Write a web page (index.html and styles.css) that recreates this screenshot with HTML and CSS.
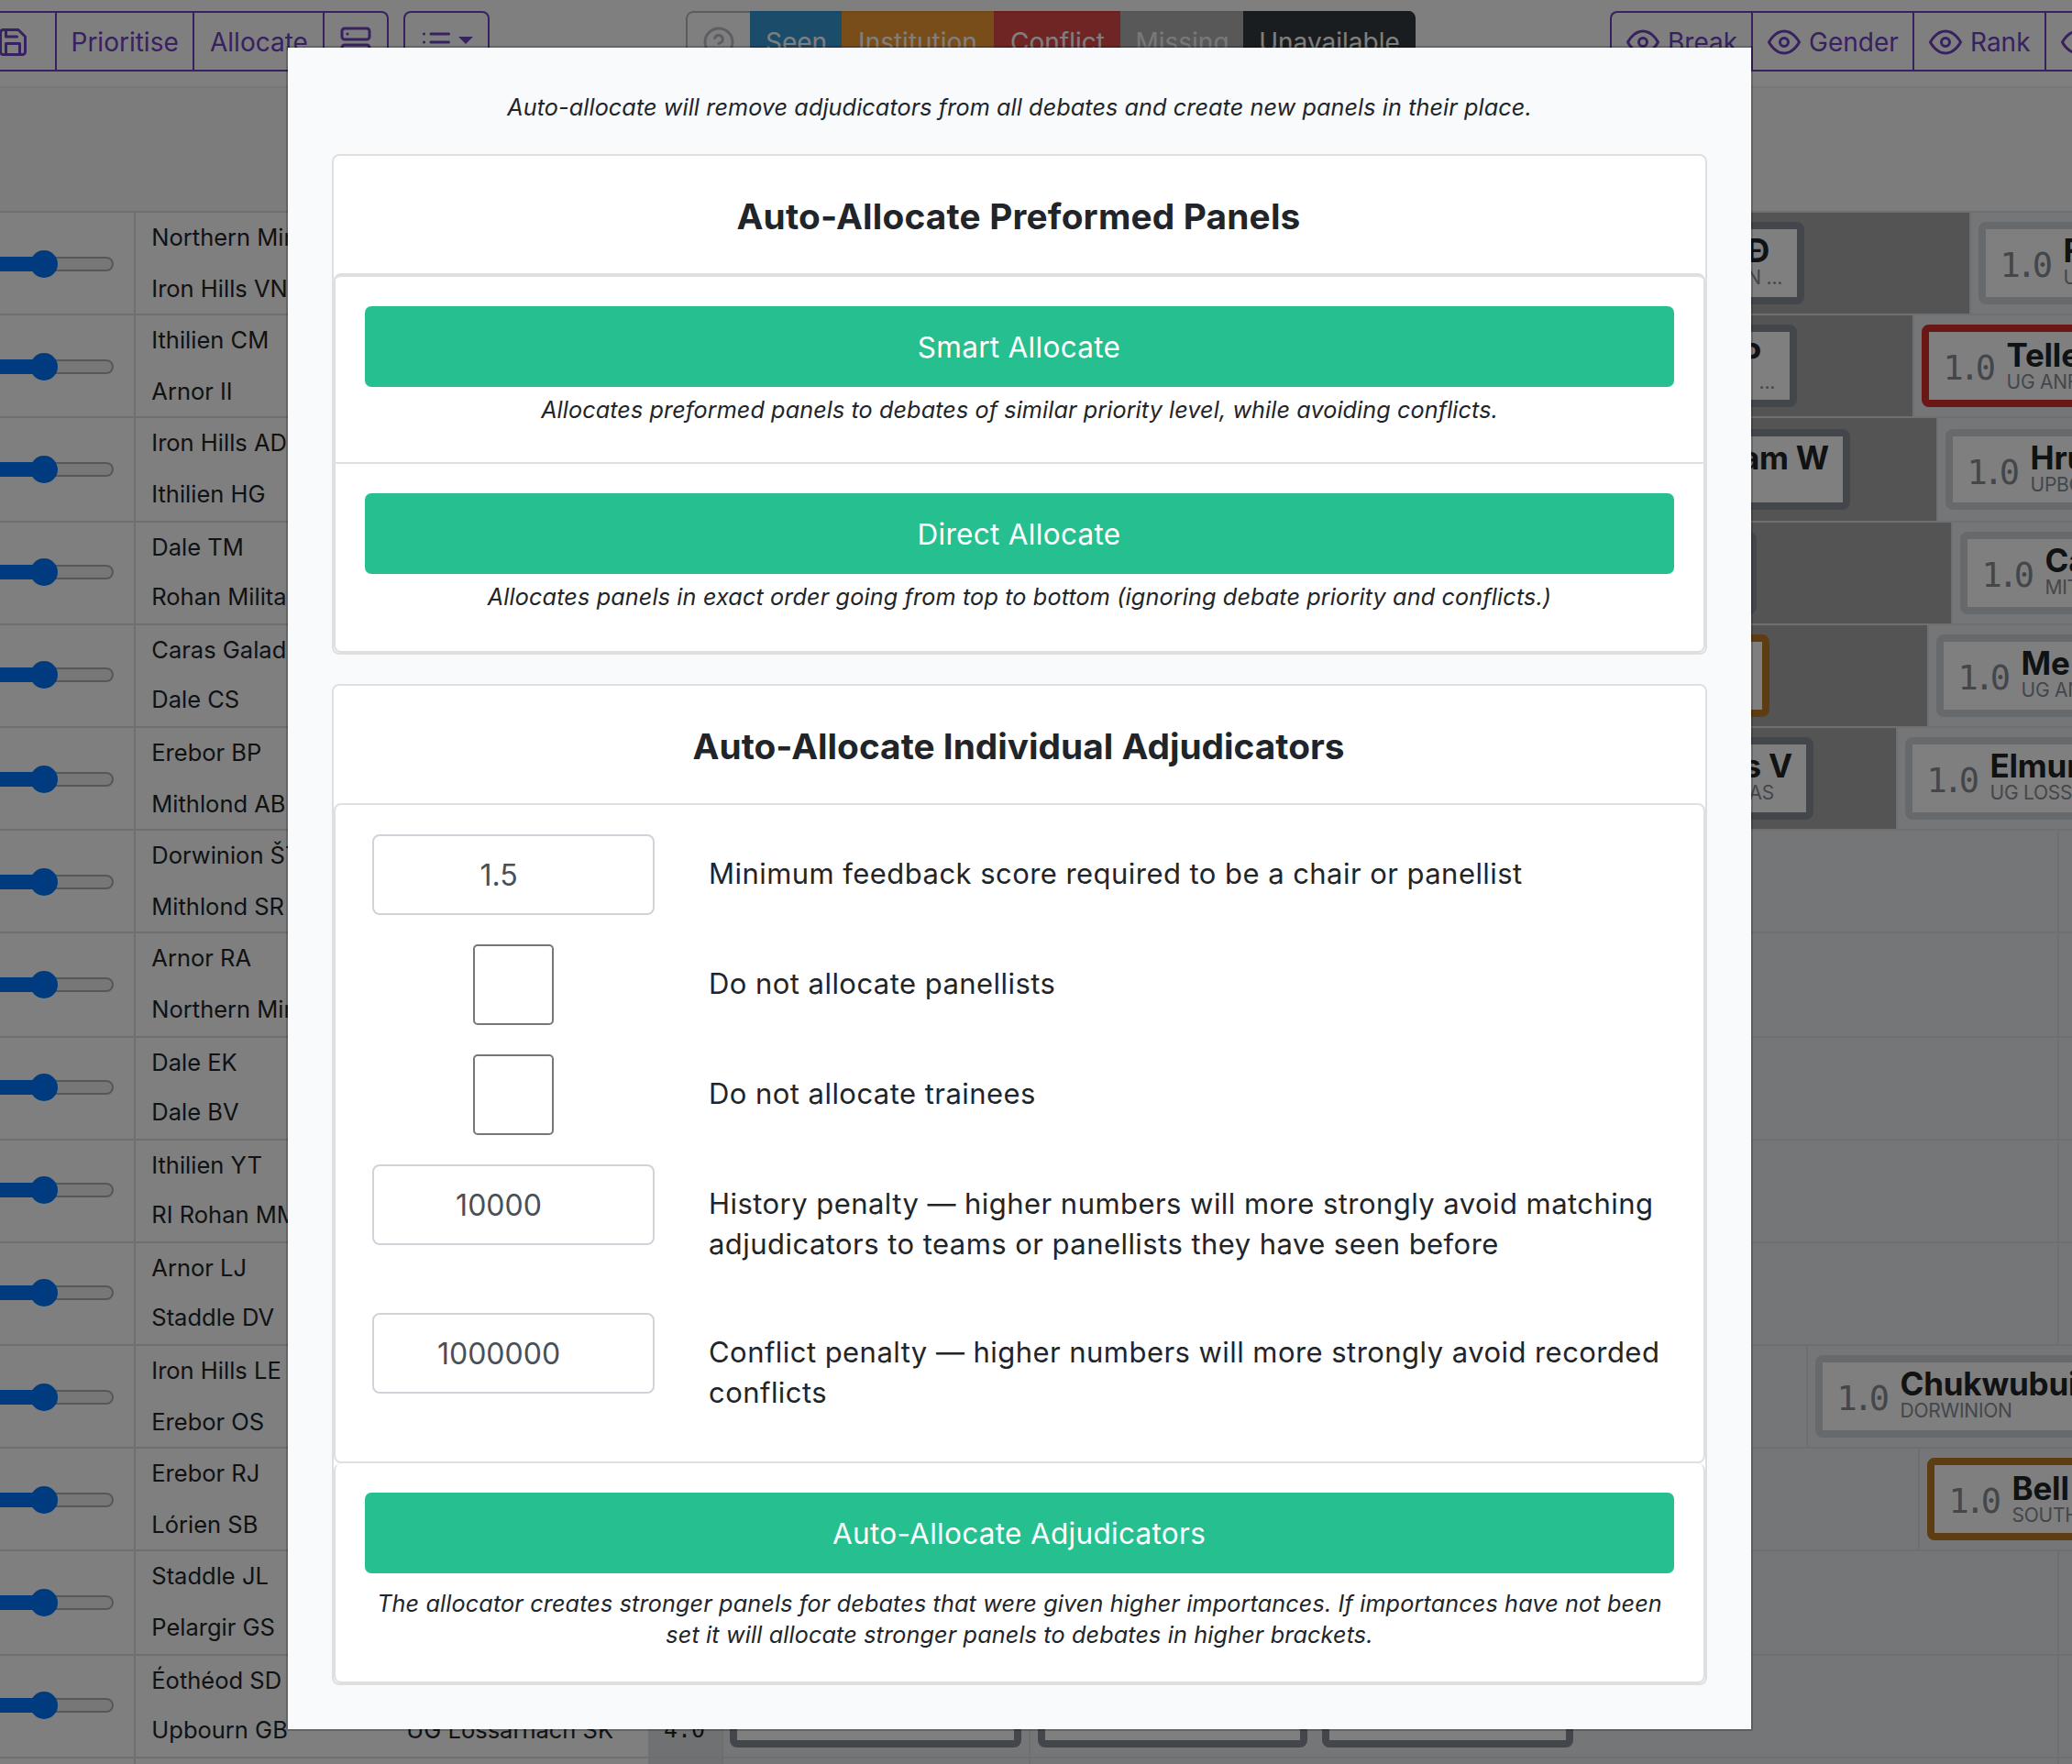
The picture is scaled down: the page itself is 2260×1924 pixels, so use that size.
FILE: index.html
```
<!DOCTYPE html>
<html lang="en">
<head>
<meta charset="utf-8">
<title>Edit Adjudicators</title>
<link rel="stylesheet" href="styles.css">
</head>
<body>
<svg class="defs" width="0" height="0">
  <symbol id="eye" viewBox="0 0 24 24"><path d="M1 12s4-8 11-8 11 8 11 8-4 8-11 8-11-8-11-8z"/><circle cx="12" cy="12" r="3"/></symbol>
  <symbol id="save" viewBox="0 0 24 24"><path d="M19 21H5a2 2 0 0 1-2-2V5a2 2 0 0 1 2-2h11l5 5v11a2 2 0 0 1-2 2z"/><path d="M17 21v-8H7v8M7 3v5h8"/></symbol>
  <symbol id="server" viewBox="0 0 24 24"><rect x="2" y="2" width="20" height="8" rx="2"/><rect x="2" y="14" width="20" height="8" rx="2"/><path d="M6 6h.01M6 18h.01"/></symbol>
  <symbol id="list" viewBox="0 0 24 24"><path d="M8 6h13M8 12h13M8 18h13M3 6h.01M3 12h.01M3 18h.01"/></symbol>
  <symbol id="help" viewBox="0 0 24 24"><circle cx="12" cy="12" r="10"/><path d="M9.09 9a3 3 0 0 1 5.83 1c0 2-3 3-3 3M12 17h.01"/></symbol>
</svg>

<nav class="toolbar">
  <div class="group tools">
    <span class="btn btn-save"><svg class="icon"><use href="#save"/></svg></span>
    <span class="btn btn-prioritise">Prioritise</span>
    <span class="btn btn-allocate">Allocate</span>
    <span class="btn btn-server"><svg class="icon"><use href="#server"/></svg></span>
  </div>
  <div class="group menu">
    <span class="btn"><svg class="icon"><use href="#list"/></svg><i class="caret"></i></span>
  </div>
  <div class="legend">
    <span class="key key-help"><svg class="icon"><use href="#help"/></svg></span>
    <span class="key key-seen">Seen</span>
    <span class="key key-institution">Institution</span>
    <span class="key key-conflict">Conflict</span>
    <span class="key key-missing">Missing</span>
    <span class="key key-unavailable">Unavailable</span>
  </div>
  <div class="group views">
    <span class="btn view-break"><svg class="icon"><use href="#eye"/></svg>Break</span>
    <span class="btn view-gender"><svg class="icon"><use href="#eye"/></svg>Gender</span>
    <span class="btn view-rank"><svg class="icon"><use href="#eye"/></svg>Rank</span>
    <span class="btn view-more"><svg class="icon"><use href="#eye"/></svg></span>
  </div>
</nav>

<main class="debates">
  <div class="row">
    <div class="importance"><div class="slider"><i></i></div></div>
    <div class="teams"><p>Northern Min</p><p>Iron Hills VN</p></div><div class="bracket"></div>
    <div class="panel full"><div class="adj ends"><b>Đ</b><small>N ...</small></div></div>
    <div class="trainees"><div class="adj"><span>1.0</span><div><b>F</b><small>U</small></div></div></div>
  </div>
  <div class="row low">
    <div class="importance"><div class="slider"><i></i></div></div>
    <div class="teams"><p>Ithilien CM</p><p>Arnor II</p></div><div class="bracket"></div>
    <div class="panel full"><div class="adj ends"><b>P</b><small>...</small></div></div>
    <div class="trainees"><div class="adj conflict"><span>1.0</span><div><b>Telle</b><small>UG ANF</small></div></div></div>
  </div>
  <div class="row low short">
    <div class="importance"><div class="slider"><i></i></div></div>
    <div class="teams"><p>Iron Hills AD</p><p>Ithilien HG</p></div><div class="bracket"></div>
    <div class="panel full"><div class="adj ends"><b>am W</b></div></div>
    <div class="trainees"><div class="adj"><span>1.0</span><div><b>Hru</b><small>UPBO</small></div></div></div>
  </div>
  <div class="row tight">
    <div class="importance"><div class="slider"><i></i></div></div>
    <div class="teams"><p>Dale TM</p><p>Rohan Milita</p></div><div class="bracket"></div>
    <div class="panel full"><div class="adj ends"></div></div>
    <div class="trainees"><div class="adj"><span>1.0</span><div><b>Ca</b><small>MIT</small></div></div></div>
  </div>
  <div class="row tight">
    <div class="importance"><div class="slider"><i></i></div></div>
    <div class="teams"><p>Caras Galad</p><p>Dale CS</p></div><div class="bracket"></div>
    <div class="panel full"><div class="adj ends institution"></div></div>
    <div class="trainees"><div class="adj"><span>1.0</span><div><b>Me</b><small>UG AN</small></div></div></div>
  </div>
  <div class="row">
    <div class="importance"><div class="slider"><i></i></div></div>
    <div class="teams"><p>Erebor BP</p><p>Mithlond AB</p></div><div class="bracket"></div>
    <div class="panel full"><div class="adj ends"><b>s V</b><small>AS</small></div></div>
    <div class="trainees"><div class="adj"><span>1.0</span><div><b>Elmur</b><small>UG LOSS</small></div></div></div>
  </div>
  <div class="row">
    <div class="importance"><div class="slider"><i></i></div></div>
    <div class="teams"><p>Dorwinion ŠT</p><p>Mithlond SR</p></div><div class="bracket"></div>
    <div class="panel"></div><div class="trainees"></div>
  </div>
  <div class="row">
    <div class="importance"><div class="slider"><i></i></div></div>
    <div class="teams"><p>Arnor RA</p><p>Northern Min</p></div><div class="bracket"></div>
    <div class="panel"></div><div class="trainees"></div>
  </div>
  <div class="row tight">
    <div class="importance"><div class="slider"><i></i></div></div>
    <div class="teams"><p>Dale EK</p><p>Dale BV</p></div><div class="bracket"></div>
    <div class="panel"></div><div class="trainees"></div>
  </div>
  <div class="row tight">
    <div class="importance"><div class="slider"><i></i></div></div>
    <div class="teams"><p>Ithilien YT</p><p>RI Rohan MM</p></div><div class="bracket"></div>
    <div class="panel"></div><div class="trainees"></div>
  </div>
  <div class="row tight">
    <div class="importance"><div class="slider"><i></i></div></div>
    <div class="teams"><p>Arnor LJ</p><p>Staddle DV</p></div><div class="bracket"></div>
    <div class="panel"></div><div class="trainees"></div>
  </div>
  <div class="row">
    <div class="importance"><div class="slider"><i></i></div></div>
    <div class="teams"><p>Iron Hills LE</p><p>Erebor OS</p></div><div class="bracket"></div>
    <div class="panel"></div>
    <div class="trainees"><div class="adj"><span>1.0</span><div><b>Chukwubui</b><small>DORWINION</small></div></div></div>
  </div>
  <div class="row low">
    <div class="importance"><div class="slider"><i></i></div></div>
    <div class="teams"><p>Erebor RJ</p><p>Lórien SB</p></div><div class="bracket"></div>
    <div class="panel"></div>
    <div class="trainees"><div class="adj institution"><span>1.0</span><div><b>Bell</b><small>SOUTH</small></div></div></div>
  </div>
  <div class="row">
    <div class="importance"><div class="slider"><i></i></div></div>
    <div class="teams"><p>Staddle JL</p><p>Pelargir GS</p></div><div class="bracket"></div>
    <div class="panel"></div><div class="trainees"></div>
  </div>
  <div class="row tight">
    <div class="importance"><div class="slider"><i></i></div></div>
    <div class="teams"><p>Éothéod SD</p><p>Upbourn GB</p><p class="right">UG Lossarnach SK</p></div>
    <div class="bracket">4.0</div>
    <div class="panel seats"><div class="chair"><div class="adj"></div></div><div class="adj wing-a"></div><div class="adj wing-b"></div></div>
    <div class="trainees"></div>
  </div>
  <div class="row last">
    <div class="importance"></div><div class="teams"></div><div class="bracket"></div>
    <div class="panel seats"><div class="chair"></div></div><div class="trainees"></div>
  </div>
</main>

<div class="backdrop">
  <section class="modal">
    <p class="note intro">Auto-allocate will remove adjudicators from all debates and create new panels in their place.</p>

    <div class="card preformed">
      <h4>Auto-Allocate Preformed Panels</h4>
      <div class="options">
        <div class="option">
          <button class="action">Smart Allocate</button>
          <p class="note">Allocates preformed panels to debates of similar priority level, while avoiding conflicts.</p>
        </div>
        <div class="option">
          <button class="action">Direct Allocate</button>
          <p class="note">Allocates panels in exact order going from top to bottom (ignoring debate priority and conflicts.)</p>
        </div>
      </div>
    </div>

    <div class="card">
      <h4>Auto-Allocate Individual Adjudicators</h4>
      <div class="settings">
        <div class="setting"><span class="field">1.5</span><label>Minimum feedback score required to be a chair or panellist</label></div>
        <div class="setting"><span class="check"></span><label>Do not allocate panellists</label></div>
        <div class="setting"><span class="check"></span><label>Do not allocate trainees</label></div>
        <div class="setting long"><span class="field">10000</span><label>History penalty — higher numbers will more strongly avoid matching adjudicators to teams or panellists they have seen before</label></div>
        <div class="setting long"><span class="field">1000000</span><label>Conflict penalty — higher numbers will more strongly avoid recorded conflicts</label></div>
      </div>
      <div class="submit">
        <button class="action">Auto-Allocate Adjudicators</button>
        <p class="note">The allocator creates stronger panels for debates that were given higher importances. If importances have not been set it will allocate stronger panels to debates in higher brackets.</p>
      </div>
    </div>
  </section>
</div>
</body>
</html>
```
FILE: styles.css
```
* { box-sizing: border-box; }
html, body { margin: 0; }
body {
  width: 2260px; height: 1924px; overflow: hidden; position: relative;
  background: #f8f9fa; color: #212529;
  font-family: Inter, "Liberation Sans", sans-serif; font-size: 25.5px;
}
p, h4 { margin: 0; }
.defs { position: absolute; }
.icon {
  width: 36px; height: 36px; flex: none;
  fill: none; stroke: currentColor; stroke-width: 2;
  stroke-linecap: round; stroke-linejoin: round;
}

/* Toolbar */
.toolbar {
  display: flex; align-items: flex-start; height: 96px; padding-top: 12px;
  background: #fff; border-bottom: 2px solid #ececec; font-size: 28px;
}
.group { display: flex; height: 66px; flex: none; border: 2px solid #6f42c1; color: #6f42c1; border-radius: 8px; }
.btn { display: flex; flex: none; align-items: center; padding-top: 2px; white-space: nowrap; }
.btn + .btn { border-left: 2px solid #6f42c1; }
.tools { width: 424px; border-left: 0; border-radius: 0 8px 8px 0; }
.btn-save { width: 60px; }
.btn-save .icon { margin-left: -4px; }
.btn-prioritise { width: 150px; padding-left: 15.5px; }
.btn-allocate { width: 142px; padding-left: 17px; }
.btn-server { width: 70px; padding-left: 15.5px; }
.menu { width: 94px; margin-left: 16px; }
.menu .icon { margin-left: 16px; }
.caret { margin: -4px 0 0 6px; border: 8px solid transparent; border-top-color: #6f42c1; border-bottom: 0; }

.legend { display: flex; flex: none; height: 66px; width: 796px; margin-left: 214px; border-radius: 8px; overflow: hidden; color: #fff; }
.key { display: flex; align-items: center; justify-content: center; padding-top: 2px; border: 2px solid transparent; border-width: 2px 0; }
.key-help { width: 70px; border: 2px solid #b9b6c4; border-right: 0; border-radius: 8px 0 0 8px; color: #bcbcc4; }
.key-seen { width: 100px; background: #369ad6; border-color: #2e93d2; padding-left: 1px; }
.key-institution { width: 166px; background: #f09a32; border-color: #e4902a; }
.key-conflict { width: 138px; background: #e04b4b; border-color: #d64040; padding-left: 1px; }
.key-missing { width: 134px; background: #b0b0b0; border-color: #acacac; color: #f0f0f0; padding-left: 1px; }
.key-unavailable { flex: 1; background: #343a40; border-color: #343a40; }

.views { margin-left: 212px; width: 504px; border-right: 0; border-radius: 8px 0 0 8px; overflow: hidden; }
.views .btn { padding-left: 16px; }
.views .icon { margin-right: 9px; }
.view-break { width: 152px; }
.view-gender { width: 176px; }
.view-rank { width: 144px; }

/* Debate rows */
.debates { padding-top: 134px; }
.row { display: flex; height: 112px; overflow: hidden; }
.row:nth-child(3), .row:nth-child(8), .row:nth-child(14) { height: 114px; }
.debates .last { height: 8px; }
.row > div { border-top: 2px solid #dcdee0; flex: none; }
.importance { width: 148px; background: #fff; border-right: 2px solid #dcdee0; padding-top: 48px; }
.tight .importance { padding-top: 46px; }
.last .importance { padding-top: 0; }
.slider {
  width: 124px; height: 16px; border: 2px solid #aeaeae; border-left: 0;
  border-radius: 0 8px 8px 0; background: #efefef; display: flex; align-items: center;
}
.slider::before { content: ""; width: 40px; height: 16px; margin: -2px 0; background: #0075ff; flex: none; }
.slider i { width: 30px; height: 30px; margin: -10px 0 -10px -7px; border-radius: 50%; background: #0075ff; flex: none; }
.teams { width: 559px; padding-left: 17.3px; background: #fff; display: grid; grid-template: 56px 54px / 279px 1fr; line-height: 54px; }
.tight .teams { grid-template-rows: 54px 54px; }
.teams p { grid-column: 1; white-space: nowrap; }
.teams .right { grid-column: 2; grid-row: 2; margin-left: -1px; }
.row .bracket {
  width: 82px; background: #dee2e6; border-right: 2px solid #d6dade;
  padding: 54px 0 0 17px; line-height: 54px;
  font-family: "DejaVu Sans Mono", monospace; font-size: 25px;
}
.last .bracket { padding-top: 0; }
.panel { flex: 1 !important; min-width: 0; background: #e9ecef; display: flex; }
.full { background: #a9a9a9; justify-content: flex-end; }
.trainees { width: 16px; background: #e9ecef; border-left: 2px solid #dcdee0; display: flex; padding-left: 8px; overflow: hidden; }

.adj {
  height: 90px; margin-top: 10px; flex: none; display: flex; white-space: nowrap;
  border: 8px solid #868e96; border-radius: 8px; background: #fff;
}
.adj b { display: block; font-size: 35px; line-height: 44px; letter-spacing: -.2px; }
.adj small { display: block; font-size: 21px; line-height: 22px; color: #868e96; letter-spacing: -.25px; margin-top: -3px; }
.adj div { padding-top: 1px; }
.adj span {
  width: 84.5px; padding-left: 15.5px; line-height: 79px; color: #868e96;
  font-family: "DejaVu Sans Mono", monospace; font-size: 37px; letter-spacing: -4.6px;
}
.trainees .adj { width: 420px; border-color: #ced4da; }
.low .adj div, .low .ends { padding-top: 3px; }
.short .adj { height: 88px; margin-top: 12px; }
.short .adj div, .short .ends { padding-top: 1px; }
.ends { width: 260px; flex-direction: column; align-items: flex-end; padding-top: 1px; }
.debates .adj.conflict { border-color: #d42e2a; }
.debates .adj.institution { border-color: #be7a24; }

.row:nth-child(1) .trainees { width: 112px; }
.row:nth-child(2) .trainees { width: 174px; }
.row:nth-child(3) .trainees { width: 148px; }
.row:nth-child(4) .trainees { width: 132px; }
.row:nth-child(5) .trainees { width: 158px; }
.row:nth-child(6) .trainees { width: 192px; }
.row:nth-child(12) .trainees { width: 290px; }
.row:nth-child(13) .trainees { width: 168px; }
.row:nth-child(1) .full { padding-right: 180px; }
.row:nth-child(2) .full { padding-right: 126px; }
.row:nth-child(3) .full { padding-right: 94px; }
.row:nth-child(4) .full { padding-right: 212px; }
.row:nth-child(5) .full { padding-right: 172px; }
.row:nth-child(6) .full { padding-right: 90px; }
.ends b { margin-right: 15px; }
.row:nth-child(1) .ends b { margin-right: 30px; }
.row:nth-child(2) .ends b { margin-right: 31px; }
.ends small { margin-right: 16px; }
.row:nth-child(6) .ends small { margin-right: 35px; }

.chair { width: 335px; border-right: 2px solid #dcdee0; padding-left: 7px; }
.chair .adj { width: 318px; }
.wing-a { width: 294px; margin-left: 8px; }
.wing-b { width: 274px; margin-left: 16px; }

/* Modal */
.backdrop { position: absolute; inset: 0; background: rgba(0, 0, 0, .5); padding: 50px 0 0 312px; }
.modal {
  width: 1600px; height: 1838px; border: 2px solid rgba(0, 0, 0, .2); border-radius: 2px;
  background: linear-gradient(#f9fafc, #f9fafc) padding-box; padding: 47px 48px 0;
}
.note { font-style: italic; font-size: 25.2px; line-height: 36px; letter-spacing: .09px; text-align: center; }
.intro { margin-bottom: 33px; }
.card { border: 2px solid #dfdfdf; border-radius: 8px; background: #fff; margin-bottom: 32px; }
h4 { height: 128px; padding-right: 2px; line-height: 132px; font-size: 38.8px; font-weight: 700; text-align: center; }
.preformed h4 { letter-spacing: .18px; }
.options { border: 2px solid #dfdfdf; border-top-width: 4px; border-radius: 8px; }
.option { height: 202px; padding: 32px 32px 0; }
.option + .option { height: 206px; border-top: 2px solid #dfdfdf; }
.action {
  display: block; width: 100%; height: 88px; border: 0; border-radius: 7px; padding: 1px 1px 0 0;
  background: #26bf90; color: #fff; font: 400 31.5px Inter, sans-serif; letter-spacing: .3px; text-align: center;
}
.option .note { margin-top: 7px; }
.option + .option .note, .submit .note { letter-spacing: .14px; }
.settings { height: 720px; border: 2px solid #dfdfdf; border-radius: 8px; padding: 32px 32px 0 40px; font-size: 31px; }
.setting { display: flex; align-items: flex-start; height: 120px; }
.setting.long { height: 162px; }
.field, .check { flex: none; height: 88px; border: 2px solid #ced4da; }
.field {
  width: 308px; margin-right: 59px; border-radius: 8px; padding: 1px 32px 0 0;
  color: #495057; text-align: center; line-height: 84px; font-size: 32px;
}
.check { width: 88px; margin: 0 169px 0 110px; border-color: #767676; border-radius: 5px; }
.setting label { flex: 1; margin-top: 21px; line-height: 44px; letter-spacing: .45px; }
.submit { height: 240px; border: 2px solid #dfdfdf; border-top: 0; border-radius: 8px; padding: 32px 32px 0; }
.submit .note { margin-top: 16px; line-height: 34px; }
```
